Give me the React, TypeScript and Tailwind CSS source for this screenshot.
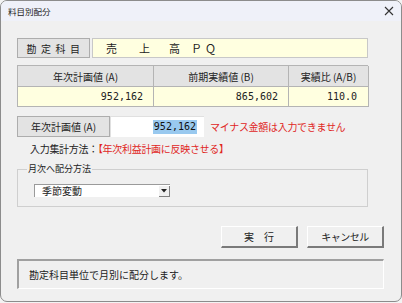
import React from "react";

const jp = { fontFamily: '"Noto Sans CJK JP", "Noto Sans", sans-serif' };
const mono = { fontFamily: '"DejaVu Sans Mono", "Liberation Mono", monospace' };

export default function App() {
  return (
    <div className="w-[402px] h-[303px] bg-[#f3f3f3]" style={jp}>
      <div className="w-[402px] h-[302px] border border-[#8c8c8c] rounded-[7px] overflow-hidden bg-[#f0f0f0] flex flex-col">
        {/* Title bar */}
        <div className="h-[20px] bg-[#eff1f9] flex items-center justify-between pl-[7px] pr-[6px] shrink-0">
          <span className="text-[8.5px] text-[#222] leading-none">料目別配分</span>
          <svg width="10" height="10" viewBox="0 0 10 10" className="mr-[1px]">
            <path d="M1 1 L9 9 M9 1 L1 9" stroke="#333" strokeWidth="1.1" />
          </svg>
        </div>

        <div className="pl-[16px] pr-[33px] pt-[17px] flex flex-col">
          {/* 勘定科目 row */}
          <div className="flex h-[20px]">
            <div className="w-[73px] h-full bg-[#e3e3e3] border border-[#adadad] flex items-center justify-center text-[10px] text-[#222] tracking-[4.5px] pl-[4px]">
              勘定科目
            </div>
            <div className="ml-[2px] flex-1 h-full bg-[#ffffe0] border border-[#c8c8c8] flex items-center text-[11px] text-[#222] pl-[13px]">
              <span className="w-[33px]">売</span>
              <span className="w-[30px]">上</span>
              <span className="w-[22px]">高</span>
              <span className="w-[14px]">Ｐ</span>
              <span>Ｑ</span>
            </div>
          </div>

          {/* Table */}
          <div className="mt-[7px] grid grid-cols-[136px_135px_80px] border-t border-l border-[#b4b4b4] text-[10px] text-[#222]">
            <div className="h-[21px] bg-[#e3e3e3] border-r border-b border-[#b4b4b4] flex items-center justify-center">年次計画値 (A)</div>
            <div className="h-[21px] bg-[#e3e3e3] border-r border-b border-[#b4b4b4] flex items-center justify-center">前期実績値 (B)</div>
            <div className="h-[21px] bg-[#e3e3e3] border-r border-b border-[#b4b4b4] flex items-center justify-center">実績比 (A/B)</div>
            <div className="h-[20px] bg-[#ffffe0] border-r border-b border-[#b4b4b4] flex items-center justify-end pr-[10px] text-[10px]" style={mono}>952,162</div>
            <div className="h-[20px] bg-[#ffffe0] border-r border-b border-[#b4b4b4] flex items-center justify-end pr-[10px] text-[10px]" style={mono}>865,602</div>
            <div className="h-[20px] bg-[#ffffe0] border-r border-b border-[#b4b4b4] flex items-center justify-end pr-[11px] text-[10px]" style={mono}>110.0</div>
          </div>

          {/* 年次計画値 input row */}
          <div className="mt-[9px] flex items-center h-[21px]">
            <div className="w-[93px] h-full bg-[#e3e3e3] border border-[#adadad] flex items-center justify-center text-[10px] text-[#222]">
              年次計画値 (A)
            </div>
            <div className="w-[94px] h-full bg-white border-t border-l border-[#e0e0e0] flex items-center justify-end pr-[7px]">
              <span className="bg-[#99c9ef] text-[#111] text-[10px] leading-[14px] px-[1px]" style={mono}>952,162</span>
            </div>
            <span className="ml-[6px] text-[10px] text-[#e0261e] tracking-[-0.3px]">マイナス金額は入力できません</span>
          </div>

          {/* 入力集計方法 */}
          <div className="mt-[2px] pl-[13px] text-[10px] leading-[20px] text-[#222] tracking-[-0.3px]">
            入力集計方法：<span className="text-[#e0261e]">【年次利益計画に反映させる】</span>
          </div>

          {/* Group box */}
          <div className="relative mt-[10px] h-[38px] border border-[#cfcfcf]">
            <span className="absolute left-[9px] -top-[8px] bg-[#f0f0f0] px-[1px] text-[9px] leading-[14px] text-[#222]">月次へ配分方法</span>
            <div className="absolute left-[16px] top-[14px] w-[136px] h-[13px] bg-white border-t border-l border-[#9a9a9a] flex items-center">
              <span className="pl-[7px] text-[10px] text-[#222] flex-1 leading-none">季節変動</span>
              <div className="w-[11px] h-[11px] bg-[#f0f0f0] border-r border-b border-[#808080] flex items-center justify-center">
                <svg width="6" height="4" viewBox="0 0 6 4"><path d="M0 0 H6 L3 3.5 Z" fill="#222" /></svg>
              </div>
            </div>
          </div>

          {/* Buttons */}
          <div className="mt-[19px] flex justify-end gap-[9px] -mr-[16px]">
            <button className="w-[77px] h-[22px] bg-[#f0f0f0] border-t border-l border-white border-r-2 border-b-2 border-r-[#7a7a7a] border-b-[#7a7a7a] text-[10px] text-[#222] tracking-[10px] pl-[10px]">
              実行
            </button>
            <button className="w-[77px] h-[22px] bg-[#f0f0f0] border-t border-l border-white border-r-2 border-b-2 border-r-[#7a7a7a] border-b-[#7a7a7a] text-[10px] text-[#222] tracking-[-0.5px]">
              キャンセル
            </button>
          </div>

          {/* Status box */}
          <div className="mt-[11px] -mr-[16px] h-[30px] border-t-2 border-l-2 border-[#a0a0a0] border-r border-b border-r-white border-b-white flex items-center pl-[10px] text-[10px] text-[#222]">
            勘定科目単位で月別に配分します。
          </div>
        </div>
      </div>
    </div>
  );
}
